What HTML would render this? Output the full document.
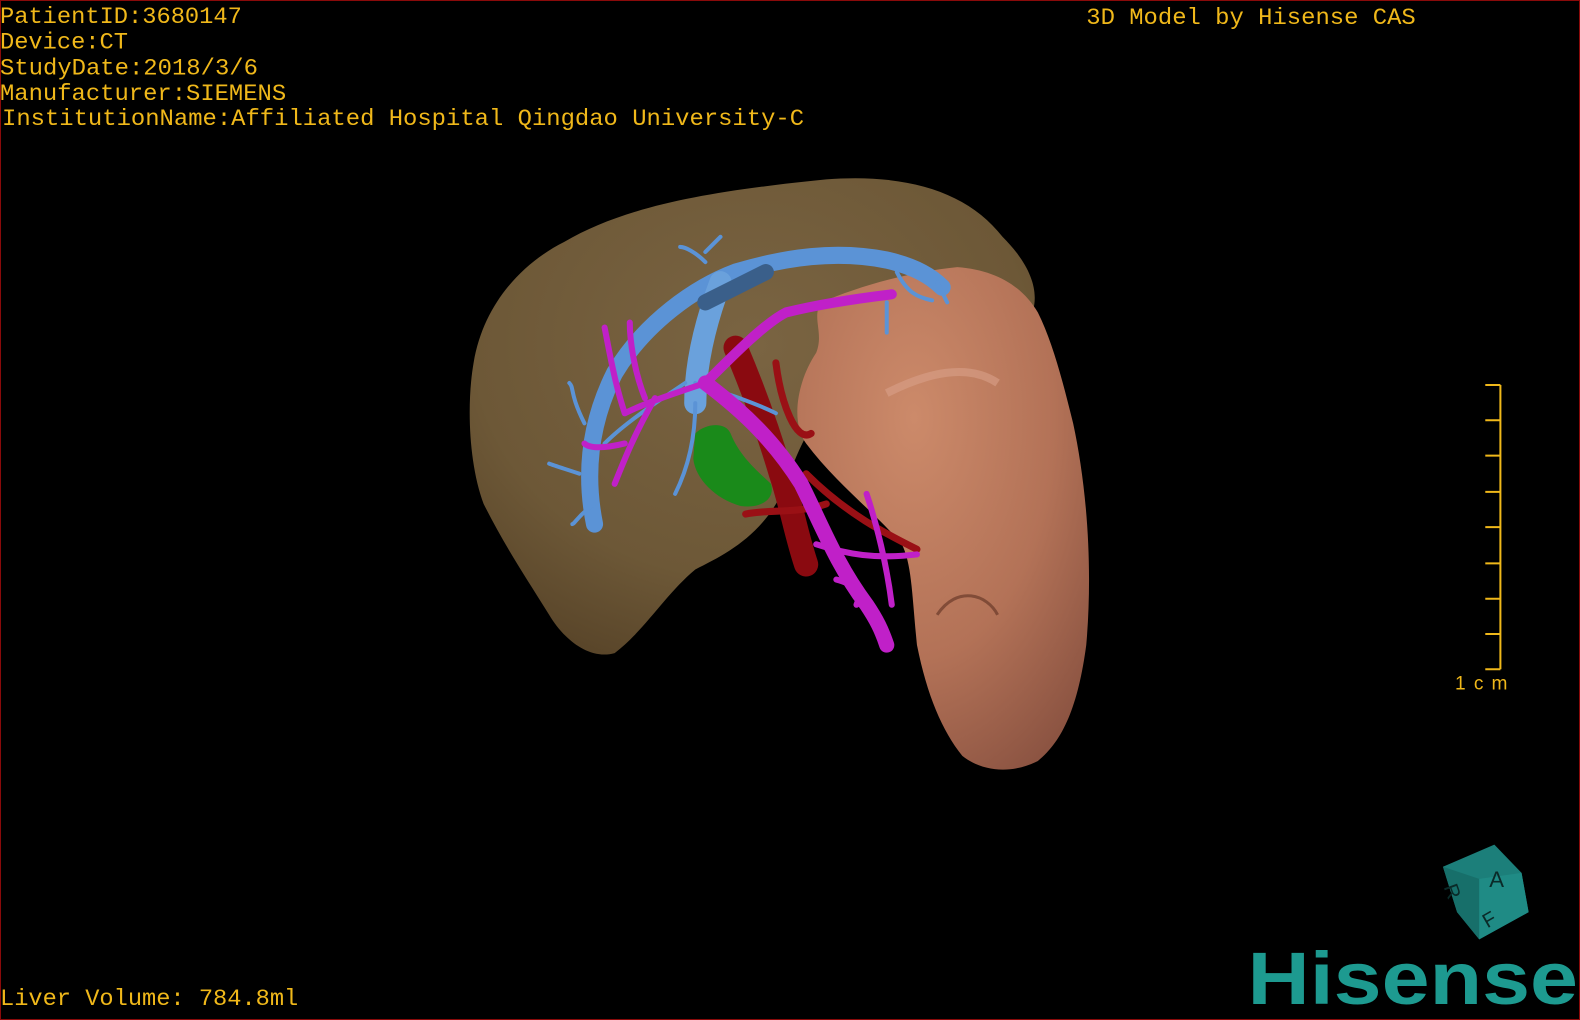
<!DOCTYPE html>
<html><head><meta charset="utf-8"><style>
html,body{margin:0;padding:0;background:#000;width:1580px;height:1020px;overflow:hidden}
svg{display:block}
</style></head><body>
<svg width="1580" height="1020" viewBox="0 0 1568 1012" preserveAspectRatio="none" xmlns="http://www.w3.org/2000/svg">
<defs>
<radialGradient id="lv" cx="0.5" cy="0.35" r="0.7">
<stop offset="0" stop-color="#7a6442"/><stop offset="0.7" stop-color="#6d5837"/><stop offset="1" stop-color="#5a462a"/>
</radialGradient>
<radialGradient id="sp" cx="0.4" cy="0.3" r="0.8">
<stop offset="0" stop-color="#cc8a6a"/><stop offset="0.6" stop-color="#b37257"/><stop offset="1" stop-color="#8c5442"/>
</radialGradient>
</defs>
<rect x="0" y="0" width="1568" height="1012" fill="#000" stroke="#8a0a0a" stroke-width="2"/>
<path d="M470,360 C480,300 520,260 560,240 C620,205 700,190 820,178 C900,172 960,190 995,235 C1025,265 1035,295 1020,320 L880,330 C840,360 800,420 780,480 C760,530 720,550 690,565 C660,590 640,625 610,648 C585,655 560,635 545,610 C520,570 500,540 480,500 C465,460 463,400 470,360 Z" fill="url(#lv)"/>
<path d="M815,300 C850,285 900,270 950,265 C990,268 1015,285 1030,310 C1045,340 1055,380 1065,420 C1078,480 1085,560 1078,640 C1070,700 1055,735 1030,755 C1005,768 975,766 955,750 C935,725 920,690 910,640 C905,590 905,560 895,540 C870,510 830,480 800,440 C785,420 790,380 810,350 C818,330 805,315 815,300 Z" fill="url(#sp)"/>
<path d="M880,390 C920,370 960,360 990,380" stroke="#d9a088" stroke-width="8" fill="none" opacity="0.6"/>
<path d="M930,610 C950,580 980,590 990,610" stroke="#5e3022" stroke-width="3" fill="none" opacity="0.6"/>
<path d="M730,345 C745,380 760,420 775,470 C785,500 790,530 800,560" stroke="#8a0a10" stroke-width="24" fill="none" stroke-linecap="round"/>
<path d="M740,510 C765,505 790,510 820,500 M800,470 C840,510 880,530 910,545 M770,360 C775,400 790,440 805,430" stroke="#9a1015" stroke-width="7" fill="none" stroke-linecap="round"/>
<path d="M690,430 C700,420 720,418 725,430 C735,455 755,470 765,480 C770,495 755,505 735,502 C710,495 690,475 688,455 Z" fill="#1a8a1a"/>
<g stroke="#5b93d6" fill="none" stroke-linecap="round">
<path d="M590,520 C580,470 585,420 610,370 C640,320 690,285 730,270 C780,255 830,248 880,258 C910,265 925,275 935,285" stroke-width="17"/>
<path d="M690,400 C690,360 700,320 715,280" stroke-width="22" stroke="#6aa1dc"/>
<path d="M700,300 C720,290 740,280 760,270" stroke-width="16" stroke="#3a5f8a"/>
<path d="M680,380 C650,400 620,420 600,440 M690,380 C720,390 750,400 770,410 M575,470 C560,465 550,462 545,460 M590,500 C575,510 570,520 568,520 M580,420 C565,390 570,385 565,380 M700,260 C690,250 680,245 675,245 M700,250 L715,235 M890,270 C900,290 910,295 925,298 M930,280 L940,300 M880,300 L880,330 M690,400 C690,440 680,470 670,490" stroke-width="4"/>
</g>
<g stroke="#c020c8" fill="none" stroke-linecap="round">
<path d="M700,380 C740,410 770,440 795,480 C815,520 830,560 860,600 C870,615 875,625 880,640" stroke-width="15"/>
<path d="M700,380 C730,350 760,320 780,310 C820,300 860,295 885,292" stroke-width="10"/>
<path d="M700,380 C670,390 640,400 620,410 M650,395 C630,430 620,455 610,480 M620,410 C610,380 605,350 600,325 M640,395 C630,370 625,340 625,320 M620,440 C600,445 585,445 580,440 M810,540 C840,550 870,555 910,550 M860,490 C870,520 880,560 885,600 M830,575 C850,580 855,590 850,600" stroke-width="6"/>
</g>
<g font-family="Liberation Mono, monospace" font-size="23" fill="#f0b81a">
<text x="0" y="23" textLength="240" lengthAdjust="spacingAndGlyphs">PatientID:3680147</text>
<text x="0" y="48" textLength="127" lengthAdjust="spacingAndGlyphs">Device:CT</text>
<text x="0" y="74" textLength="256" lengthAdjust="spacingAndGlyphs">StudyDate:2018/3/6</text>
<text x="0" y="99" textLength="284" lengthAdjust="spacingAndGlyphs">Manufacturer:SIEMENS</text>
<text x="2" y="124" textLength="796" lengthAdjust="spacingAndGlyphs">InstitutionName:Affiliated Hospital Qingdao University-C</text>
<text x="1078" y="24" textLength="327" lengthAdjust="spacingAndGlyphs">3D Model by Hisense CAS</text>
<text x="0" y="997" textLength="296" lengthAdjust="spacingAndGlyphs">Liver Volume: 784.8ml</text>
</g>
<g stroke="#f0b81a" stroke-width="2" fill="none">
<path d="M1489,382 V664"/>
<path d="M1474,382 H1489 M1474,417 H1489 M1474,452 H1489 M1474,488 H1489 M1474,523 H1489 M1474,559 H1489 M1474,594 H1489 M1474,629 H1489 M1474,664 H1489"/>
</g>
<text x="1444" y="684" font-family="Liberation Sans, sans-serif" font-size="19" fill="#f0b81a" textLength="52" lengthAdjust="spacing">1cm</text>
<g>
<path d="M1432,860 L1483,838 L1510,866 L1517,905 L1468,932 L1446,905 Z" fill="#1c7f7a"/>
<path d="M1432,860 L1468,872 L1468,932 L1446,905 Z" fill="#176f6a"/>
<path d="M1468,872 L1510,866 L1517,905 L1468,932 Z" fill="#1f8b85"/>
<text x="1478" y="880" font-family="Liberation Sans, sans-serif" font-size="22" fill="#0a2a28">A</text>
<text x="1472" y="918" font-family="Liberation Sans, sans-serif" font-size="20" fill="#0a2a28" transform="rotate(-30 1480 912)">F</text>
<text x="1436" y="895" font-family="Liberation Sans, sans-serif" font-size="20" fill="#0a2a28" transform="rotate(70 1445 885)">R</text>
</g>
<text x="1238" y="996" font-family="Liberation Sans, sans-serif" font-weight="bold" font-size="74" fill="#1d9a90" textLength="328" lengthAdjust="spacingAndGlyphs">Hisense</text>
</svg>
</body></html>
